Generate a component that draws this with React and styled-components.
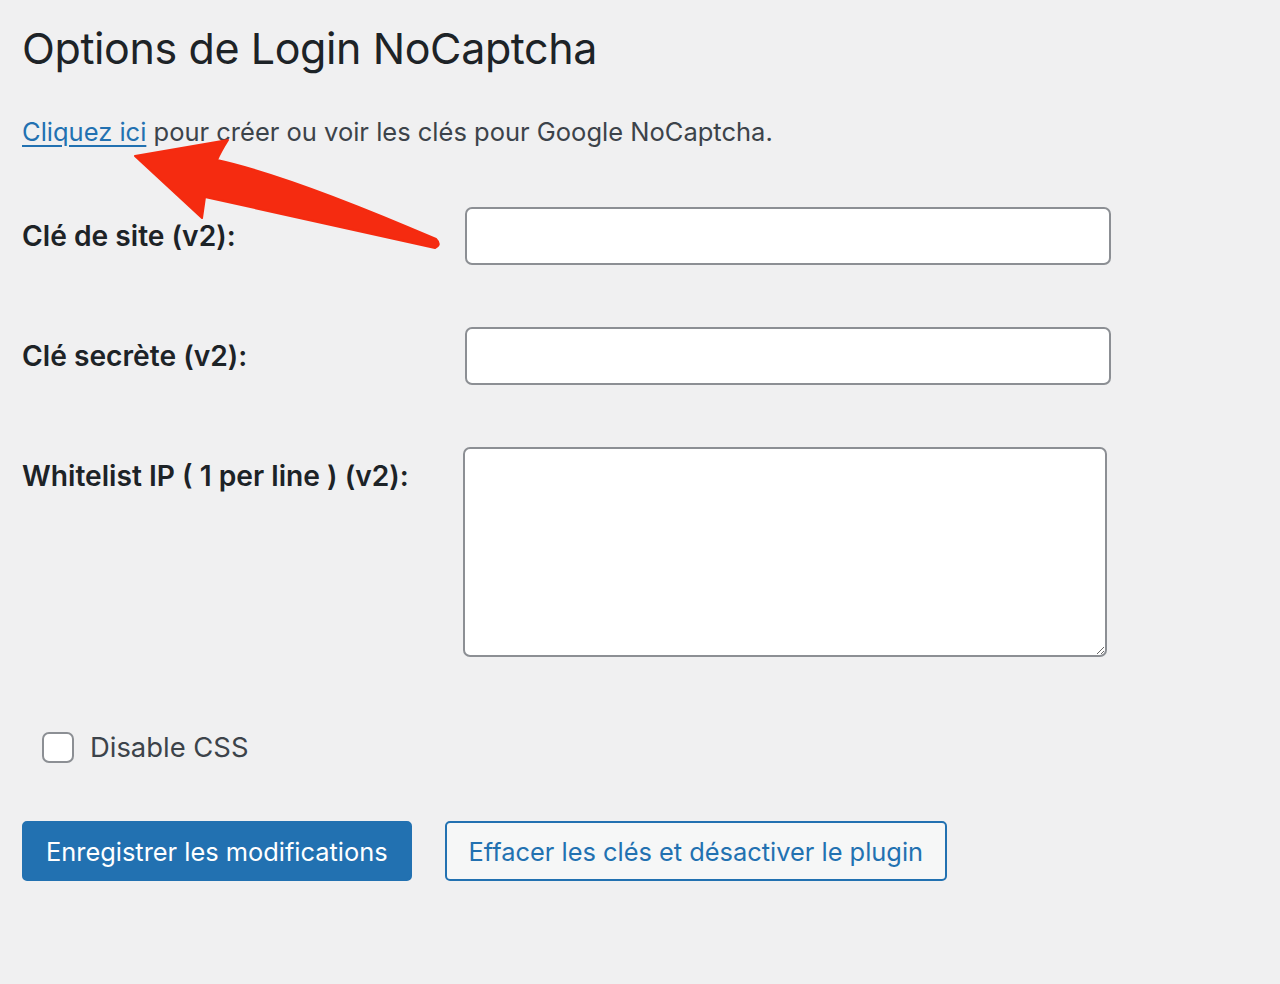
import React from "react";
import styled, { createGlobalStyle } from "styled-components";

const GlobalStyle = createGlobalStyle`
  html, body {
    margin: 0;
    padding: 0;
    background: #f0f0f1;
  }
  body {
    font-family: Inter, "Noto Sans", sans-serif;
    color: #1d2327;
  }
`;

const Page = styled.div`
  position: relative;
  min-height: 984px;
  padding: 20px 22px 0;
  box-sizing: border-box;
`;

const Title = styled.h1`
  margin: 0;
  font-size: 43px;
  font-weight: 400;
  line-height: 56px;
  letter-spacing: -0.4px;
`;

const Intro = styled.p`
  margin: 41px 0 0;
  font-size: 25.5px;
  line-height: 30px;
  color: #3c434a;

  a {
    color: #2271b1;
    text-decoration: underline;
    text-underline-offset: 4px;
    text-decoration-thickness: 1.5px;
  }
`;

const FormGrid = styled.div`
  display: grid;
  grid-template-columns: 443px 646px;
  row-gap: 62px;
  margin-top: 60px;
  align-items: start;
`;

const Label = styled.label`
  font-size: 28.2px;
  font-weight: 600;
  line-height: 58px;
`;

const TextInput = styled.input`
  box-sizing: border-box;
  width: 646px;
  height: 58px;
  border: 2px solid #8c8f94;
  border-radius: 7px;
  background: #fff;
`;

const TextArea = styled.textarea`
  box-sizing: border-box;
  width: 644px;
  height: 210px;
  margin-left: -2px;
  border: 2px solid #8c8f94;
  border-radius: 7px;
  background: #fff;
`;

const CheckRow = styled.label`
  display: flex;
  align-items: center;
  gap: 16px;
  margin: 73px 0 0 20px;
  font-size: 27.4px;
  color: #3c434a;
`;

const CheckBox = styled.span`
  width: 32px;
  height: 31px;
  box-sizing: border-box;
  border: 2px solid #8c8f94;
  border-radius: 7px;
  background: #fff;
`;

const Actions = styled.div`
  display: flex;
  gap: 33px;
  margin-top: 57px;
`;

const Button = styled.button`
  box-sizing: border-box;
  height: 60px;
  padding: 0 22px;
  border-radius: 5px;
  border: 2px solid #2271b1;
  font-family: inherit;
  font-size: 25.4px;
  background: ${(p) => (p.$primary ? "#2271b1" : "#f6f7f7")};
  color: ${(p) => (p.$primary ? "#fff" : "#2271b1")};
`;

const Arrow = styled.svg`
  position: absolute;
  left: 0;
  top: 0;
  pointer-events: none;
`;

export default function App() {
  return (
    <>
      <GlobalStyle />
      <Page>
        <Title>Options de Login NoCaptcha</Title>
        <Intro>
          <a href="#">Cliquez ici</a> pour créer ou voir les clés pour Google NoCaptcha.
        </Intro>
        <FormGrid>
          <Label>Clé de site (v2):</Label>
          <TextInput type="text" />
          <Label>Clé secrète (v2):</Label>
          <TextInput type="text" />
          <Label>Whitelist IP ( 1 per line ) (v2):</Label>
          <TextArea />
        </FormGrid>
        <CheckRow>
          <CheckBox />
          Disable CSS
        </CheckRow>
        <Actions>
          <Button $primary>Enregistrer les modifications</Button>
          <Button>Effacer les clés et désactiver le plugin</Button>
        </Actions>
        <Arrow width="460" height="260" viewBox="0 0 460 260">
          <path
            d="M135 156 L228 140 Q221 151 217 160 Q290 176 436 239 Q442 245 435 248 Q320 222 205 197 L202 218 Z"
            fill="#f52b10"
            stroke="#f52b10"
            strokeWidth="2"
            strokeLinejoin="round"
          />
        </Arrow>
      </Page>
    </>
  );
}
